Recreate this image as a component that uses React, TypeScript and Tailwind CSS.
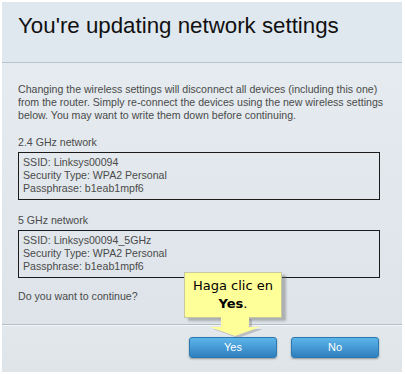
import React from "react";

const networks = [
  { label: "2.4 GHz network", ssid: "Linksys00094" },
  { label: "5 GHz network", ssid: "Linksys00094_5GHz" },
];

const App: React.FC = () => {
  return (
    <div className="w-[405px] h-[374px] bg-white p-[2px] pr-[3px] font-['Liberation_Sans',Arial,sans-serif]">
      <div className="relative h-full flex flex-col bg-gradient-to-b from-[#e7edf1] to-[#dce2e7]">
        {/* Header */}
        <div className="h-[61px] shrink-0 bg-[#dfe8ef] border-b border-[#b9c3cc] pl-[16px] pt-[9px]">
          <h1 className="text-[22.3px] leading-[30px] text-[#111] whitespace-nowrap">You're updating network settings</h1>
        </div>

        {/* Body */}
        <div className="flex-1 px-[16px] pt-[20px] text-[10.6px] leading-[13px] text-[#4b4b4b] whitespace-nowrap">
          <p>
            Changing the wireless settings will disconnect all devices (including this one)
            <br />
            from the router. Simply re-connect the devices using the new wireless settings
            <br />
            below. You may want to write them down before continuing.
          </p>

          {networks.map((n) => (
            <div key={n.label} className="mt-[14px]">
              <p>{n.label}</p>
              <div className="mt-[3px] w-[362px] h-[48px] border border-[#1b1b1b] pl-[4px] pt-[3px]">
                <p>SSID: {n.ssid}</p>
                <p>Security Type: WPA2 Personal</p>
                <p>Passphrase: b1eab1mpf6</p>
              </div>
            </div>
          ))}

          <p className="mt-[12px]">Do you want to continue?</p>
        </div>

        {/* Footer */}
        <div className="h-[48px] shrink-0 border-t border-[#b4bcc4] shadow-[inset_0_1px_0_#f3f6f8] bg-gradient-to-b from-[#e3e8ec] to-[#dfe4e8] flex justify-end items-start gap-[14px] pt-[12px] pr-[23px]">
          <button className="w-[88px] h-[21px] rounded-[3px] border border-[#2c78b2] bg-gradient-to-b from-[#5cb5e9] to-[#2f7fbe] text-white text-[11px] shadow-[0_1px_2px_rgba(0,0,0,0.35)]">
            Yes
          </button>
          <button className="w-[88px] h-[21px] rounded-[3px] border border-[#2c78b2] bg-gradient-to-b from-[#5cb5e9] to-[#2f7fbe] text-white text-[11px] shadow-[0_1px_2px_rgba(0,0,0,0.35)]">
            No
          </button>
        </div>

        {/* Tooltip callout */}
        <div className="absolute left-[182px] top-[270px] w-[98px] flex flex-col items-center">
          <div className="w-[98px] h-[46px] bg-[#ffff99] border border-[#c8c8a0] shadow-[4px_3px_2px_rgba(100,100,100,0.4)] flex flex-col items-center justify-center font-['DejaVu_Sans',Verdana,sans-serif] text-[13px] leading-[18px] text-black">
            <span>Haga clic en</span>
            <span>
              <b>Yes</b>.
            </span>
          </div>
          <svg width="64" height="22" viewBox="0 0 64 22" className="-mt-[1px] ml-[6px]">
            <polygon points="17,0 45,0 45,10 56,10 31,19 6,10 17,10" fill="#777" opacity="0.35" transform="translate(3,2)" />
            <polygon points="17,0 45,0 45,10 56,10 31,19 6,10 17,10" fill="#ffff99" />
          </svg>
        </div>
      </div>
    </div>
  );
};

export default App;
